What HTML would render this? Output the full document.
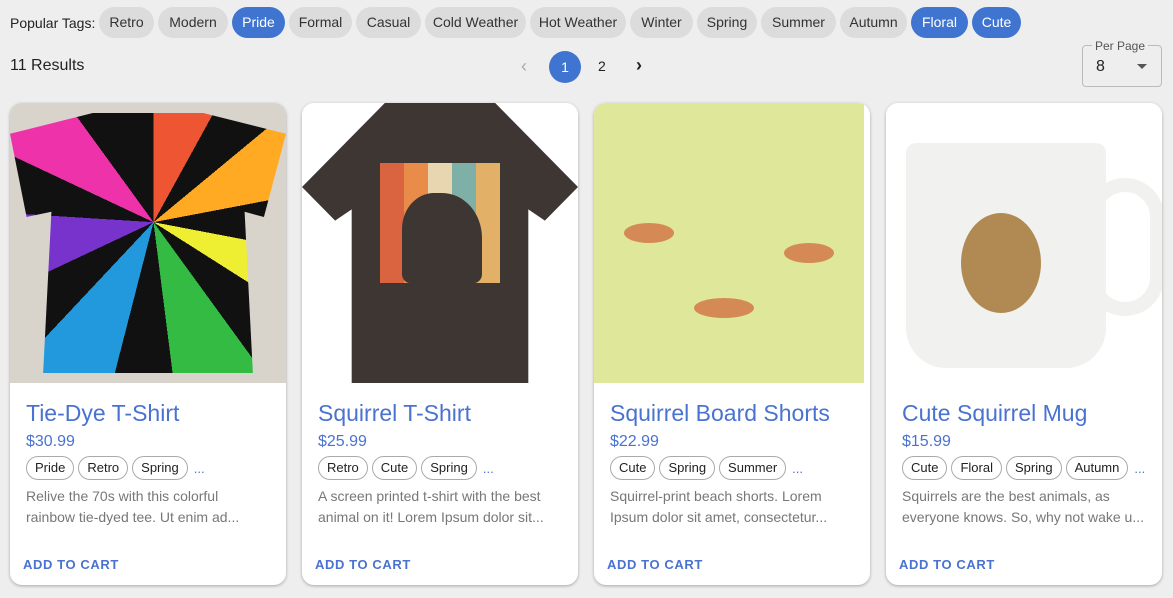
<!DOCTYPE html>
<html><head><style>
body{margin:0;width:1173px;height:598px;background:#eeeeee;font-family:"Liberation Sans",sans-serif;position:relative;overflow:hidden;color:#222}
.abs{position:absolute}
.tag{position:absolute;top:7px;height:31px;line-height:31px;border-radius:16px;background:#dcdcdc;font-size:14px;text-align:center;color:#333}
.tag.on{background:#3f74d0;color:#fff}
.card{position:absolute;top:103px;width:276px;height:482px;background:#fff;border-radius:12px;overflow:hidden;box-shadow:0 1px 3px rgba(0,0,0,.3)}
.img{height:280px;position:relative;overflow:hidden}
.t{position:absolute;left:16px;top:297px;font-size:23px;color:#4a72d0}
.p{position:absolute;left:16px;top:330px;font-size:16px;color:#4a72d0}
.chips{position:absolute;left:16px;top:353px;display:flex;gap:4px;align-items:center}
.chip{border:1px solid #aaa;border-radius:12px;padding:0 8px;height:22px;line-height:22px;font-size:13px;color:#222}
.dots{color:#4a72d0;font-size:13px;margin-left:2px}
.d{position:absolute;left:16px;top:383px;width:245px;font-size:14px;line-height:21px;color:#777}
.b{position:absolute;left:13px;top:454px;font-size:13px;font-weight:bold;letter-spacing:.6px;color:#4a72d0}
</style></head><body>
<div class="abs" style="left:10px;top:15px;font-size:14px">Popular Tags:</div>
<div class="tag" style="left:99px;width:55px">Retro</div>
<div class="tag" style="left:158px;width:70px">Modern</div>
<div class="tag on" style="left:232px;width:53px">Pride</div>
<div class="tag" style="left:289px;width:63px">Formal</div>
<div class="tag" style="left:356px;width:65px">Casual</div>
<div class="tag" style="left:425px;width:101px">Cold Weather</div>
<div class="tag" style="left:530px;width:96px">Hot Weather</div>
<div class="tag" style="left:630px;width:63px">Winter</div>
<div class="tag" style="left:697px;width:60px">Spring</div>
<div class="tag" style="left:761px;width:75px">Summer</div>
<div class="tag" style="left:840px;width:67px">Autumn</div>
<div class="tag on" style="left:911px;width:57px">Floral</div>
<div class="tag on" style="left:972px;width:49px">Cute</div>
<div class="abs" style="left:10px;top:57px;font-size:16px">11 Results</div>
<div class="abs" style="left:521px;top:56px;font-size:18px;color:#aaa">‹</div>
<div class="abs" style="left:549px;top:51px;width:32px;height:32px;border-radius:50%;background:#3f74d0;color:#fff;font-size:14px;line-height:32px;text-align:center">1</div>
<div class="abs" style="left:598px;top:58px;font-size:14px">2</div>
<div class="abs" style="left:636px;top:55px;font-size:18px;font-weight:bold">›</div>
<div class="abs" style="left:1082px;top:45px;width:78px;height:40px;border:1px solid #bbb;border-radius:4px"></div>
<div class="abs" style="left:1092px;top:39px;font-size:12px;background:#eee;padding:0 3px;color:#555">Per Page</div>
<div class="abs" style="left:1096px;top:58px;font-size:16px">8</div>
<div class="abs" style="left:1137px;top:64px;width:0;height:0;border-left:5px solid transparent;border-right:5px solid transparent;border-top:5px solid #555"></div>

<div class="card" style="left:10px"><div class="img" style="background:#d8d4cc"><div style="position:absolute;left:0;top:10px;width:276px;height:260px;background:conic-gradient(from 0deg at 52% 42%,#e53 0 8%,#111 8% 14%,#fa2 14% 22%,#111 22% 28%,#ee3 28% 34%,#111 34% 40%,#3b4 40% 48%,#111 48% 54%,#29d 54% 62%,#111 62% 68%,#73c 68% 76%,#111 76% 82%,#e3a 82% 90%,#111 90% 100%);clip-path:polygon(0 8%,30% 0,70% 0,100% 8%,92% 40%,85% 38%,88% 100%,12% 100%,15% 38%,6% 40%)"></div></div>
<div class="t">Tie-Dye T-Shirt</div><div class="p">$30.99</div>
<div class="chips"><span class="chip">Pride</span><span class="chip">Retro</span><span class="chip">Spring</span><span class="dots">...</span></div>
<div class="d">Relive the 70s with this colorful rainbow tie-dyed tee. Ut enim ad...</div><div class="b">ADD TO CART</div></div>

<div class="card" style="left:302px"><div class="img" style="background:#fff"><div style="position:absolute;left:0;top:0;width:276px;height:280px;background:#3e3633;clip-path:polygon(0 30%,30% 0,70% 0,100% 30%,88% 42%,82% 38%,82% 100%,18% 100%,18% 38%,12% 42%)"></div>
<div style="position:absolute;left:78px;top:60px;width:120px;height:120px;background:linear-gradient(90deg,#d9643f 0 20%,#e98c4a 20% 40%,#e8d6b0 40% 60%,#7fb0a8 60% 80%,#e3b067 80%)"></div>
<div style="position:absolute;left:100px;top:90px;width:80px;height:90px;background:#3e3633;border-radius:40% 50% 10% 10%"></div></div>
<div class="t">Squirrel T-Shirt</div><div class="p">$25.99</div>
<div class="chips"><span class="chip">Retro</span><span class="chip">Cute</span><span class="chip">Spring</span><span class="dots">...</span></div>
<div class="d">A screen printed t-shirt with the best animal on it! Lorem Ipsum dolor sit...</div><div class="b">ADD TO CART</div></div>

<div class="card" style="left:594px"><div class="img" style="background:#fff"><div style="position:absolute;left:0;top:0;width:270px;height:280px;background:#dfe79a"></div>
<div style="position:absolute;left:30px;top:120px;width:50px;height:20px;background:#d58a55;border-radius:50%"></div>
<div style="position:absolute;left:190px;top:140px;width:50px;height:20px;background:#d58a55;border-radius:50%"></div>
<div style="position:absolute;left:100px;top:195px;width:60px;height:20px;background:#d58a55;border-radius:50%"></div></div>
<div class="t">Squirrel Board Shorts</div><div class="p">$22.99</div>
<div class="chips"><span class="chip">Cute</span><span class="chip">Spring</span><span class="chip">Summer</span><span class="dots">...</span></div>
<div class="d">Squirrel-print beach shorts. Lorem Ipsum dolor sit amet, consectetur...</div><div class="b">ADD TO CART</div></div>

<div class="card" style="left:886px"><div class="img" style="background:#fff"><div style="position:absolute;left:20px;top:40px;width:200px;height:225px;background:#f1f1ef;border-radius:10px 10px 40px 40px"></div>
<div style="position:absolute;left:200px;top:75px;width:50px;height:110px;border:14px solid #f1f1ef;border-radius:40px"></div>
<div style="position:absolute;left:75px;top:110px;width:80px;height:100px;background:#b08a52;border-radius:50%"></div></div>
<div class="t">Cute Squirrel Mug</div><div class="p">$15.99</div>
<div class="chips"><span class="chip">Cute</span><span class="chip">Floral</span><span class="chip">Spring</span><span class="chip">Autumn</span><span class="dots">...</span></div>
<div class="d">Squirrels are the best animals, as everyone knows. So, why not wake u...</div><div class="b">ADD TO CART</div></div>
</body></html>
